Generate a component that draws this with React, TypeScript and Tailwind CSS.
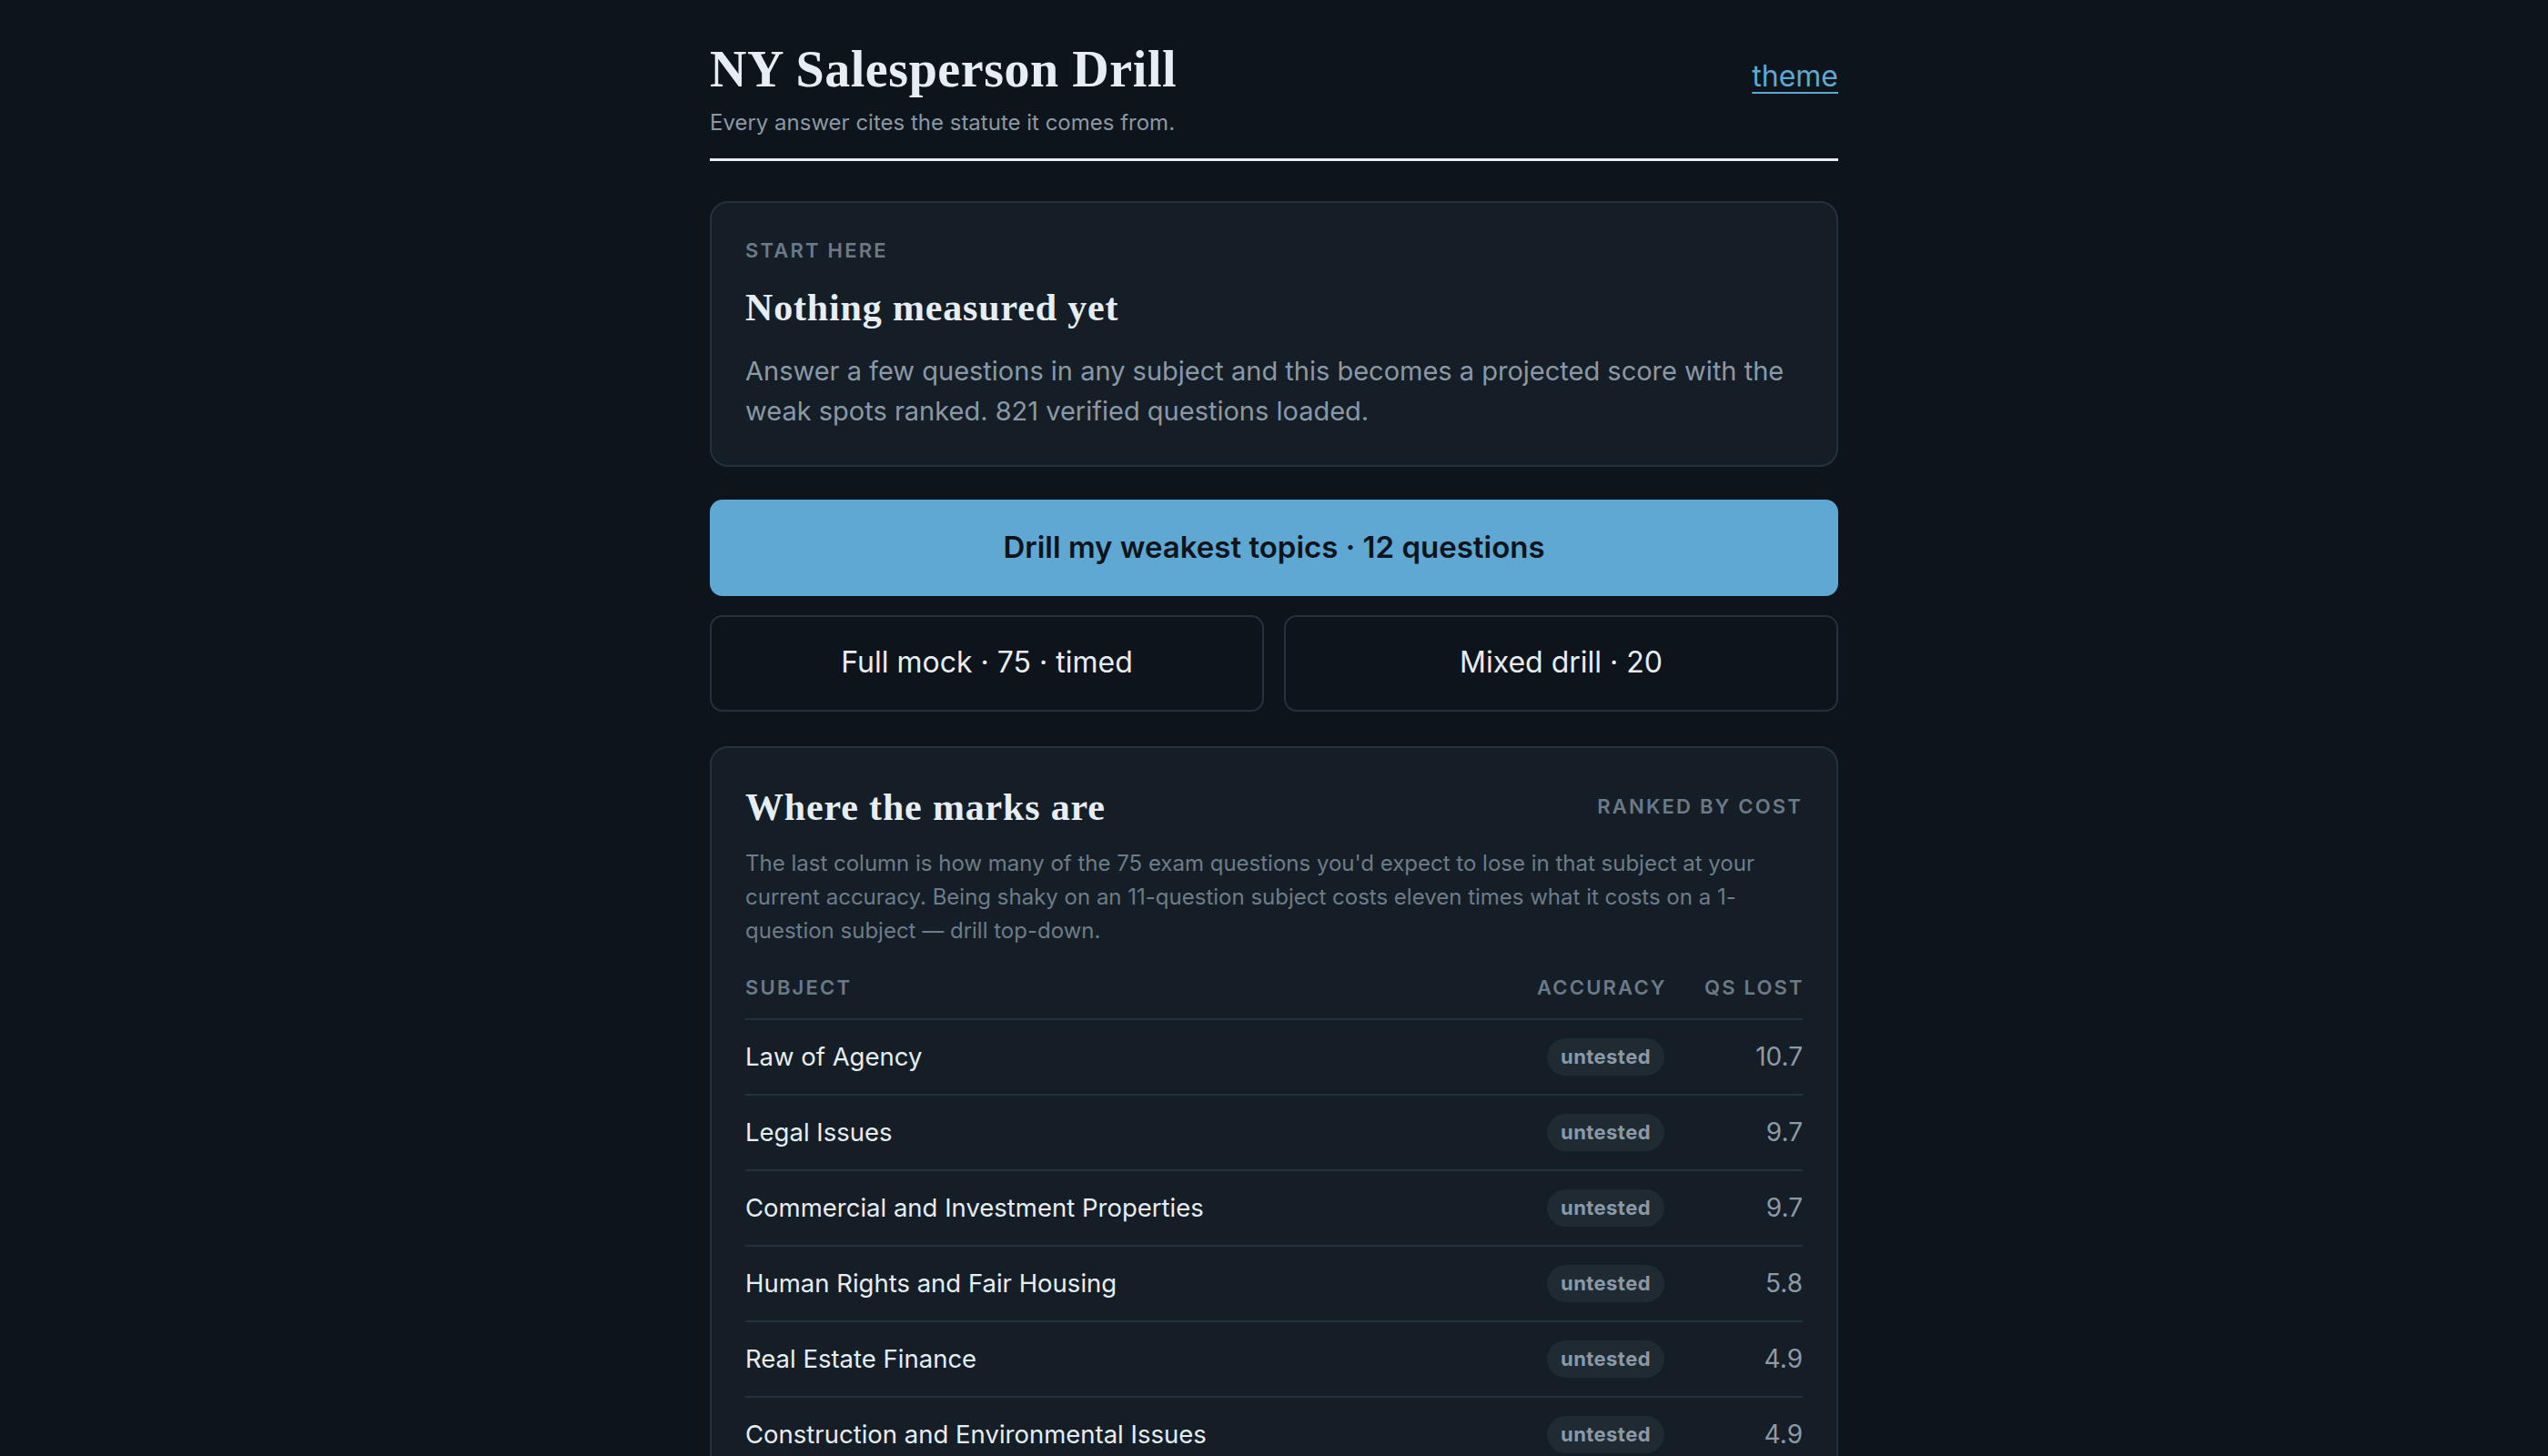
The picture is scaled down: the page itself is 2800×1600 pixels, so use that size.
import React from "react";

const rows: { name: string; lost: string }[] = [
  { name: "Law of Agency", lost: "10.7" },
  { name: "Legal Issues", lost: "9.7" },
  { name: "Commercial and Investment Properties", lost: "9.7" },
  { name: "Human Rights and Fair Housing", lost: "5.8" },
  { name: "Real Estate Finance", lost: "4.9" },
  { name: "Construction and Environmental Issues", lost: "4.9" },
  { name: "Valuation Process and Pricing Properties", lost: "3.9" },
  { name: "Land Use Regulations", lost: "3.9" },
  { name: "Contracts", lost: "3.0" },
];

export default function App() {
  return (
    <div className="min-h-screen bg-[#0e141b] font-['Inter',sans-serif] text-[#e6edf3]">
      <div className="mx-auto w-[1240px] pt-[46px] pb-[80px]">
        <header className="flex items-baseline justify-between border-b-[3px] border-[#e6edf3] pb-[23px]">
          <div>
            <h1 className="font-['Liberation_Serif',serif] text-[56px] font-bold leading-[1.1] tracking-[0.01em] text-[#e6edf3]">
              NY Salesperson Drill
            </h1>
            <p className="mt-[11px] text-[24px] leading-[32px] text-[#8b98a5]">
              Every answer cites the statute it comes from.
            </p>
          </div>
          <a
            href="#"
            className="text-[32px] leading-[1.2] text-[#5fa8d3] underline decoration-2 underline-offset-[6px]"
          >
            theme
          </a>
        </header>

        <section className="mt-[44px] rounded-[20px] border-2 border-[#25313d] bg-[#151e27] px-[37px] pt-[39px] pb-[37px]">
          <div className="text-[22px] font-semibold uppercase leading-[27px] tracking-[0.1em] text-[#6b7a88]">
            Start here
          </div>
          <h2 className="mt-[25px] font-['Liberation_Serif',serif] text-[42px] font-bold leading-[48px] tracking-[0.02em] text-[#e6edf3]">
            Nothing measured yet
          </h2>
          <p className="mt-[24px] text-[29px] leading-[44px] text-[#8b98a5]">
            Answer a few questions in any subject and this becomes a projected score with the weak spots ranked. 821
            verified questions loaded.
          </p>
        </section>

        <button className="mt-[36px] flex h-[106px] w-full items-center justify-center rounded-[14px] bg-[#5fa8d3] text-[33px] font-semibold leading-[1.2] text-[#0e141b]">
          Drill my weakest topics · 12 questions
        </button>

        <div className="mt-[21px] grid grid-cols-2 gap-[22px]">
          <button className="flex h-[106px] items-center justify-center rounded-[14px] border-2 border-[#26313c] text-[32px] leading-[1.2] text-[#e6edf3]">
            Full mock · 75 · timed
          </button>
          <button className="flex h-[106px] items-center justify-center rounded-[14px] border-2 border-[#26313c] text-[32px] leading-[1.2] text-[#e6edf3]">
            Mixed drill · 20
          </button>
        </div>

        <section className="mt-[38px] rounded-[20px] border-2 border-[#25313d] bg-[#151e27] px-[37px] pt-[41px] pb-[30px]">
          <div className="flex items-center justify-between">
            <h2 className="font-['Liberation_Serif',serif] text-[42px] font-bold leading-[48px] tracking-[0.02em] text-[#e6edf3]">
              Where the marks are
            </h2>
            <span className="text-[22px] font-semibold uppercase leading-[27px] tracking-[0.1em] text-[#6b7a88]">
              Ranked by cost
            </span>
          </div>
          <p className="mt-[19px] text-[24px] leading-[37px] text-[#6e7c89]">
            The last column is how many of the 75 exam questions you'd expect to lose in that subject at your current
            accuracy. Being shaky on an 11-question subject costs eleven times what it costs on a 1-question subject —
            drill top-down.
          </p>

          <div className="mt-[31px] grid grid-cols-[1fr_140px_108px] gap-x-[44px] border-b-2 border-[#25313d] pb-[20px] text-[22px] font-semibold uppercase leading-[27px] tracking-[0.1em] text-[#6b7a88]">
            <span>Subject</span>
            <span className="whitespace-nowrap text-right">Accuracy</span>
            <span className="whitespace-nowrap text-right">Qs lost</span>
          </div>

          {rows.map((r) => (
            <div
              key={r.name}
              className="grid grid-cols-[1fr_140px_108px] items-center gap-x-[44px] border-b-2 border-[#25313d] py-[20px] last:border-b-0"
            >
              <span className="text-[27.5px] leading-[34px] text-[#e6edf3]">{r.name}</span>
              <span className="flex justify-end">
                <span className="flex h-[41px] items-center rounded-full bg-[#1f2a33] px-[15px] text-[22px] font-bold leading-none tracking-[0.02em] text-[#8a99a6]">
                  untested
                </span>
              </span>
              <span className="text-right text-[28px] leading-[34px] text-[#8d9aa6]">{r.lost}</span>
            </div>
          ))}
        </section>
      </div>
    </div>
  );
}
